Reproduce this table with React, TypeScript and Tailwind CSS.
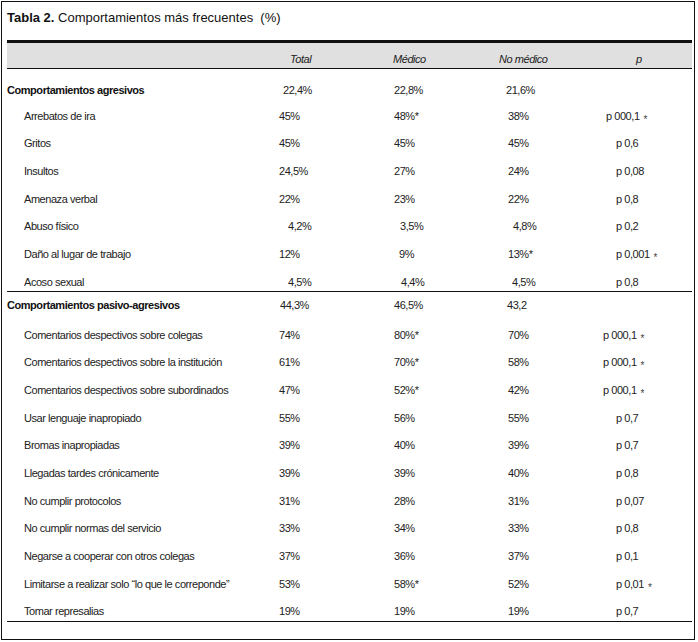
import React from "react";

type Row = {
  label: string;
  v: [string, string, string];
  o?: [string, string, string];
  p?: string;
  po?: string;
  star?: boolean;
  h: string;
  bold?: boolean;
};

const agresivos: Row[] = [
  { label: "Comportamientos agresivos", bold: true, h: "h-[25.5px]", v: ["22,4%", "22,8%", "21,6%"], o: ["ml-[4px]", "", "ml-[-2px]"] },
  { label: "Arrebatos de ira", h: "h-[27.7px]", v: ["45%", "48%*", "38%"], p: "p 000,1", po: "ml-[-10px]", star: true },
  { label: "Gritos", h: "h-[27.7px]", v: ["45%", "45%", "45%"], p: "p 0,6" },
  { label: "Insultos", h: "h-[27.7px]", v: ["24,5%", "27%", "24%"], p: "p 0,08" },
  { label: "Amenaza verbal", h: "h-[27.7px]", v: ["22%", "23%", "22%"], p: "p 0,8" },
  { label: "Abuso físico", h: "h-[27.7px]", v: ["4,2%", "3,5%", "4,8%"], o: ["ml-[9px]", "ml-[6px]", "ml-[5px]"], p: "p 0,2" },
  { label: "Daño al lugar de trabajo", h: "h-[27.7px]", v: ["12%", "9%", "13%*"], o: ["", "ml-[5px]", ""], p: "p 0,001", star: true },
  { label: "Acoso sexual", h: "h-[27.7px]", v: ["4,5%", "4,4%", "4,5%"], o: ["ml-[9px]", "ml-[7px]", "ml-[4px]"], p: "p 0,8" },
];

const pasivos: Row[] = [
  { label: "Comportamientos pasivo-agresivos", bold: true, h: "h-[29.5px]", v: ["44,3%", "46,5%", "43,2"], o: ["ml-[1px]", "", "ml-[-1px]"] },
  { label: "Comentarios despectivos sobre colegas", h: "h-[27.7px]", v: ["74%", "80%*", "70%"], p: "p 000,1", po: "ml-[-13px]", star: true },
  { label: "Comentarios despectivos sobre la institución", h: "h-[27.7px]", v: ["61%", "70%*", "58%"], p: "p 000,1", po: "ml-[-13px]", star: true },
  { label: "Comentarios despectivos sobre subordinados", h: "h-[27.7px]", v: ["47%", "52%*", "42%"], p: "p 000,1", po: "ml-[-13px]", star: true },
  { label: "Usar lenguaje inapropiado", h: "h-[27.7px]", v: ["55%", "56%", "55%"], p: "p 0,7" },
  { label: "Bromas inapropiadas", h: "h-[27.7px]", v: ["39%", "40%", "39%"], p: "p 0,7" },
  { label: "Llegadas tardes crónicamente", h: "h-[27.7px]", v: ["39%", "39%", "40%"], p: "p 0,8" },
  { label: "No cumplir protocolos", h: "h-[27.7px]", v: ["31%", "28%", "31%"], p: "p 0,07" },
  { label: "No cumplir normas del servicio", h: "h-[27.7px]", v: ["33%", "34%", "33%"], p: "p 0,8" },
  { label: "Negarse a cooperar con otros colegas", h: "h-[27.7px]", v: ["37%", "36%", "37%"], p: "p 0,1" },
  { label: "Limitarse a realizar solo “lo que le correponde”", h: "h-[27.7px]", v: ["53%", "58%*", "52%"], p: "p 0,01", star: true },
  { label: "Tomar represalias", h: "h-[27.7px]", v: ["19%", "19%", "19%"], p: "p 0,7" },
];

const grid = "grid grid-cols-[272px_115px_114px_108px_76px]";

function TableRow({ row }: { row: Row }) {
  return (
    <div className={`${grid} ${row.h} pt-[6px] leading-[14px]`}>
      <div className={row.bold ? "font-bold text-[#111] whitespace-nowrap" : "pl-[17px] whitespace-nowrap"}>{row.label}</div>
      {row.v.map((val, i) => (
        <div key={i} className={row.o?.[i] || ""}>
          {val}
        </div>
      ))}
      <div className={`whitespace-nowrap ${row.po || ""}`}>
        {row.p}
        {row.star && <span className="ml-[4px] inline-block translate-y-[3px] text-[10px] text-[#444]">*</span>}
      </div>
    </div>
  );
}

export default function App() {
  return (
    <div className="w-[698px] h-[642px] bg-white pl-px pt-px">
      <div className="w-[694px] h-[639px] border border-[#111] pl-[5px] pr-[2px]">
        <p className="mt-[8px] text-[13px] leading-[16px] font-['Liberation_Sans',Arial,sans-serif] text-[#111]">
          <b>Tabla 2.</b> Comportamientos más frecuentes&nbsp; (%)
        </p>

        <div className="mt-[14px] border-t-[3px] border-[#111] font-['Liberation_Sans',Arial,sans-serif] text-[11px] tracking-[-0.45px] text-[#222]">
          {/* header */}
          <div className={`${grid} h-[26px] bg-[#e0e0e0] border-b border-[#111] pt-[9px] leading-[14px] italic`}>
            <div />
            <div className="ml-[11px]">Total</div>
            <div className="ml-[-1px]">Médico</div>
            <div className="ml-[-9px]">No médico</div>
            <div className="ml-[20px]">p</div>
          </div>

          <div className="h-[223px] border-b border-[#111] pt-[8px]">
            {agresivos.map((r) => (
              <TableRow key={r.label} row={r} />
            ))}
          </div>

          <div className="h-[330px] border-b border-[#111]">
            {pasivos.map((r) => (
              <TableRow key={r.label} row={r} />
            ))}
          </div>
        </div>
      </div>
    </div>
  );
}
